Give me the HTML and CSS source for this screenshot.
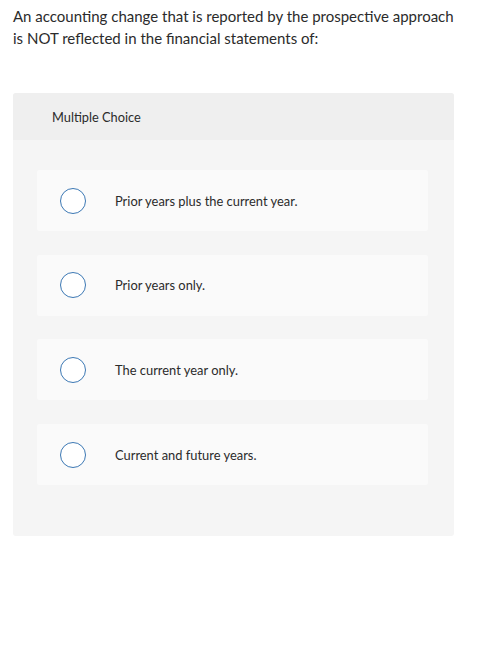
FILE: index.html
```html
<!DOCTYPE html>
<html>
<head>
<meta charset="utf-8">
<link rel="stylesheet" href="styles.css">
</head>
<body>
<div class="page">
  <p class="question">An accounting change that is reported by the prospective approach is NOT reflected in the financial statements of:</p>
  <div class="card">
    <div class="card-header">Multiple Choice</div>
    <div class="card-body">
      <div class="option"><span class="radio"></span><span class="label">Prior years plus the current year.</span></div>
      <div class="option"><span class="radio"></span><span class="label">Prior years only.</span></div>
      <div class="option"><span class="radio"></span><span class="label">The current year only.</span></div>
      <div class="option"><span class="radio"></span><span class="label">Current and future years.</span></div>
    </div>
  </div>
</div>
</body>
</html>
```
FILE: styles.css
```css
html, body {
  margin: 0;
  padding: 0;
  background: #ffffff;
}
body {
  font-family: "Lato", "Open Sans", sans-serif;
  color: #2b2b2b;
}
.page {
  padding: 5px 47px 0 13px;
}
.question {
  margin: 0;
  font-size: 15px;
  line-height: 22px;
  color: #2b2b2b;
}
.card {
  margin-top: 44px;
  width: 441px;
  border-radius: 3px;
  overflow: hidden;
  background: #f5f5f5;
}
.card-header {
  background: #efefef;
  height: 47px;
  box-sizing: border-box;
  padding-left: 39px;
  display: flex;
  align-items: center;
  font-size: 12.8px;
  color: #2b2b2b;
}
.card-body {
  padding: 30px 26px 51px 24px;
  display: flex;
  flex-direction: column;
  gap: 23.7px;
}
.option {
  height: 61px;
  background: #fafafa;
  border-radius: 2px;
  display: flex;
  align-items: center;
  padding-left: 23px;
}
.radio {
  width: 24px;
  height: 24px;
  border: 1px solid #3c78b4;
  border-radius: 50%;
  background: #ffffff;
  flex: none;
}
.label {
  margin-left: 29px;
  font-size: 12.9px;
  color: #2b2b2b;
}
```
